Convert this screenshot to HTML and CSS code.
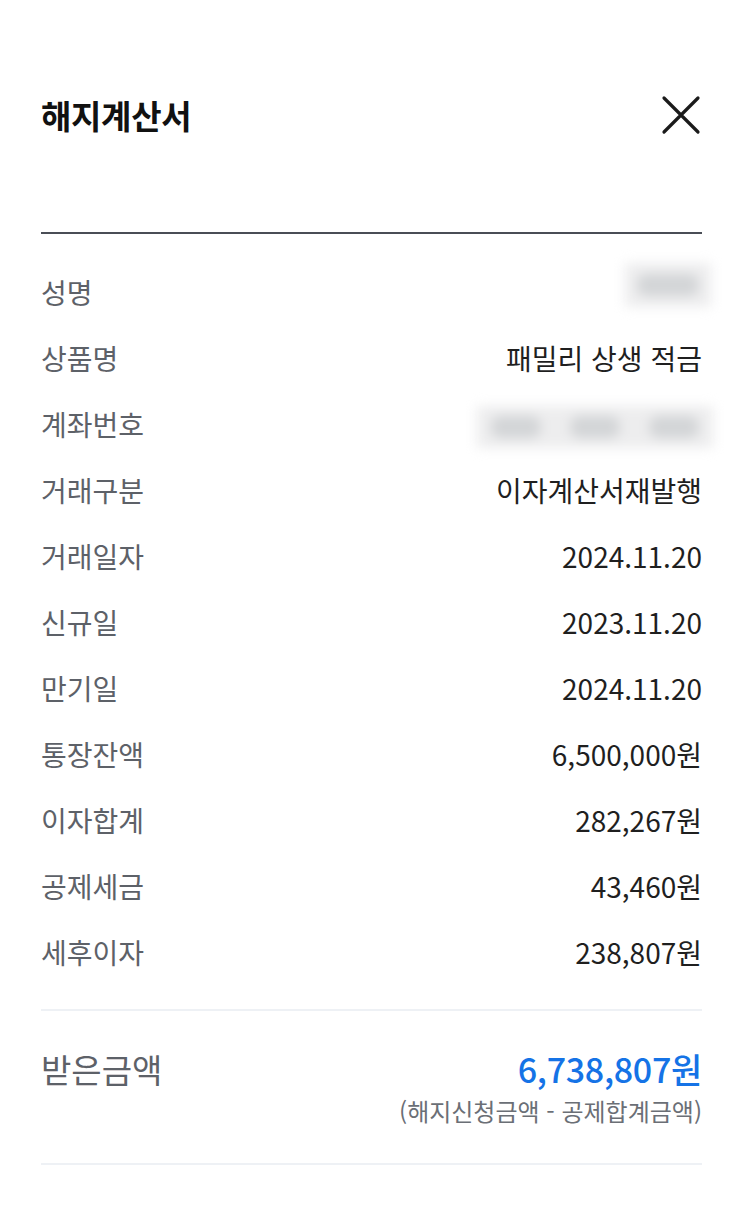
FILE: index.html
```html
<!DOCTYPE html>
<html lang="ko">
<head>
    <meta charset="UTF-8">
    <meta name="viewport" content="width=device-width, initial-scale=1.0">
    <title>해지계산서</title>
    <link rel="stylesheet" href="styles.css">
</head>
<body>
    <div class="sheet">
        <div class="header">
            <h1>해지계산서</h1>
            <button class="close" aria-label="닫기">
                <svg width="40" height="40" viewBox="0 0 40 40">
                    <path d="M3 3 L37 37 M37 3 L3 37" stroke="#1b1b1b" stroke-width="3.2" stroke-linecap="round" fill="none"/>
                </svg>
            </button>
        </div>
        <div class="rule"></div>
        <div class="rows">
            <div class="row"><span class="label">성명</span><span class="masked name"><i></i></span></div>
            <div class="row"><span class="label">상품명</span><span class="value">패밀리 상생 적금</span></div>
            <div class="row"><span class="label">계좌번호</span><span class="masked account"><i></i><i></i><i></i></span></div>
            <div class="row"><span class="label">거래구분</span><span class="value">이자계산서재발행</span></div>
            <div class="row"><span class="label">거래일자</span><span class="value">2024.11.20</span></div>
            <div class="row"><span class="label">신규일</span><span class="value">2023.11.20</span></div>
            <div class="row"><span class="label">만기일</span><span class="value">2024.11.20</span></div>
            <div class="row"><span class="label">통장잔액</span><span class="value">6,500,000원</span></div>
            <div class="row"><span class="label">이자합계</span><span class="value">282,267원</span></div>
            <div class="row"><span class="label">공제세금</span><span class="value">43,460원</span></div>
            <div class="row"><span class="label">세후이자</span><span class="value">238,807원</span></div>
        </div>
        <div class="total">
            <span class="total-label">받은금액</span>
            <div class="total-right">
                <span class="total-value">6,738,807원</span>
                <span class="total-note">(해지신청금액 - 공제합계금액)</span>
            </div>
        </div>
    </div>
</body>
</html>
```

FILE: styles.css
```css
body {
    margin: 0;
    background: #ffffff;
    font-family: "Noto Sans CJK KR", "Noto Sans", sans-serif;
    color: #222222;
}
.sheet {
    padding: 75px 41px 0 41px;
}
.header {
    height: 80px;
    display: flex;
    align-items: center;
    justify-content: space-between;
}
.header h1 {
    margin: 0;
    font-size: 33px;
    font-weight: 700;
    letter-spacing: -0.3px;
    color: #111111;
}
.close {
    border: none;
    background: none;
    padding: 0;
    width: 40px;
    height: 40px;
    margin-right: 1px;
    cursor: pointer;
}
.close svg {
    display: block;
}
.rule {
    margin-top: 77px;
    height: 2px;
    background: #4a4e56;
}
.rows {
    padding: 25px 0 24px;
    border-bottom: 2px solid #eef1f5;
}
.row {
    height: 66px;
    display: flex;
    align-items: center;
    justify-content: space-between;
    font-size: 28px;
    letter-spacing: 0;
}
.label {
    color: #5d6168;
}
.value {
    color: #1f1f1f;
}
.masked {
    display: flex;
    align-items: center;
    justify-content: space-around;
    background: #ededee;
    filter: blur(6px);
}
.masked i {
    display: block;
    height: 22px;
    background: #d3d5d7;
    border-radius: 10px;
}
.name {
    width: 86px;
    height: 44px;
    margin-right: -9px;
    margin-top: -14px;
}
.name i {
    width: 62px;
}
.account {
    width: 236px;
    height: 42px;
    margin-right: -11px;
    margin-top: 6px;
}
.account i {
    width: 50px;
}
.total {
    display: flex;
    justify-content: space-between;
    align-items: flex-start;
    padding: 37px 0 37px;
    border-bottom: 2px solid #eef1f5;
}
.total-label {
    font-size: 33px;
    letter-spacing: 0;
    color: #5d6168;
    line-height: 42px;
}
.total-right {
    display: flex;
    flex-direction: column;
    align-items: flex-end;
}
.total-value {
    font-size: 34px;
    font-weight: 500;
    letter-spacing: -0.3px;
    color: #1573e6;
    line-height: 42px;
}
.total-note {
    margin-top: 6px;
    font-size: 24px;
    letter-spacing: 0;
    color: #6b6f76;
    line-height: 30px;
}
```
